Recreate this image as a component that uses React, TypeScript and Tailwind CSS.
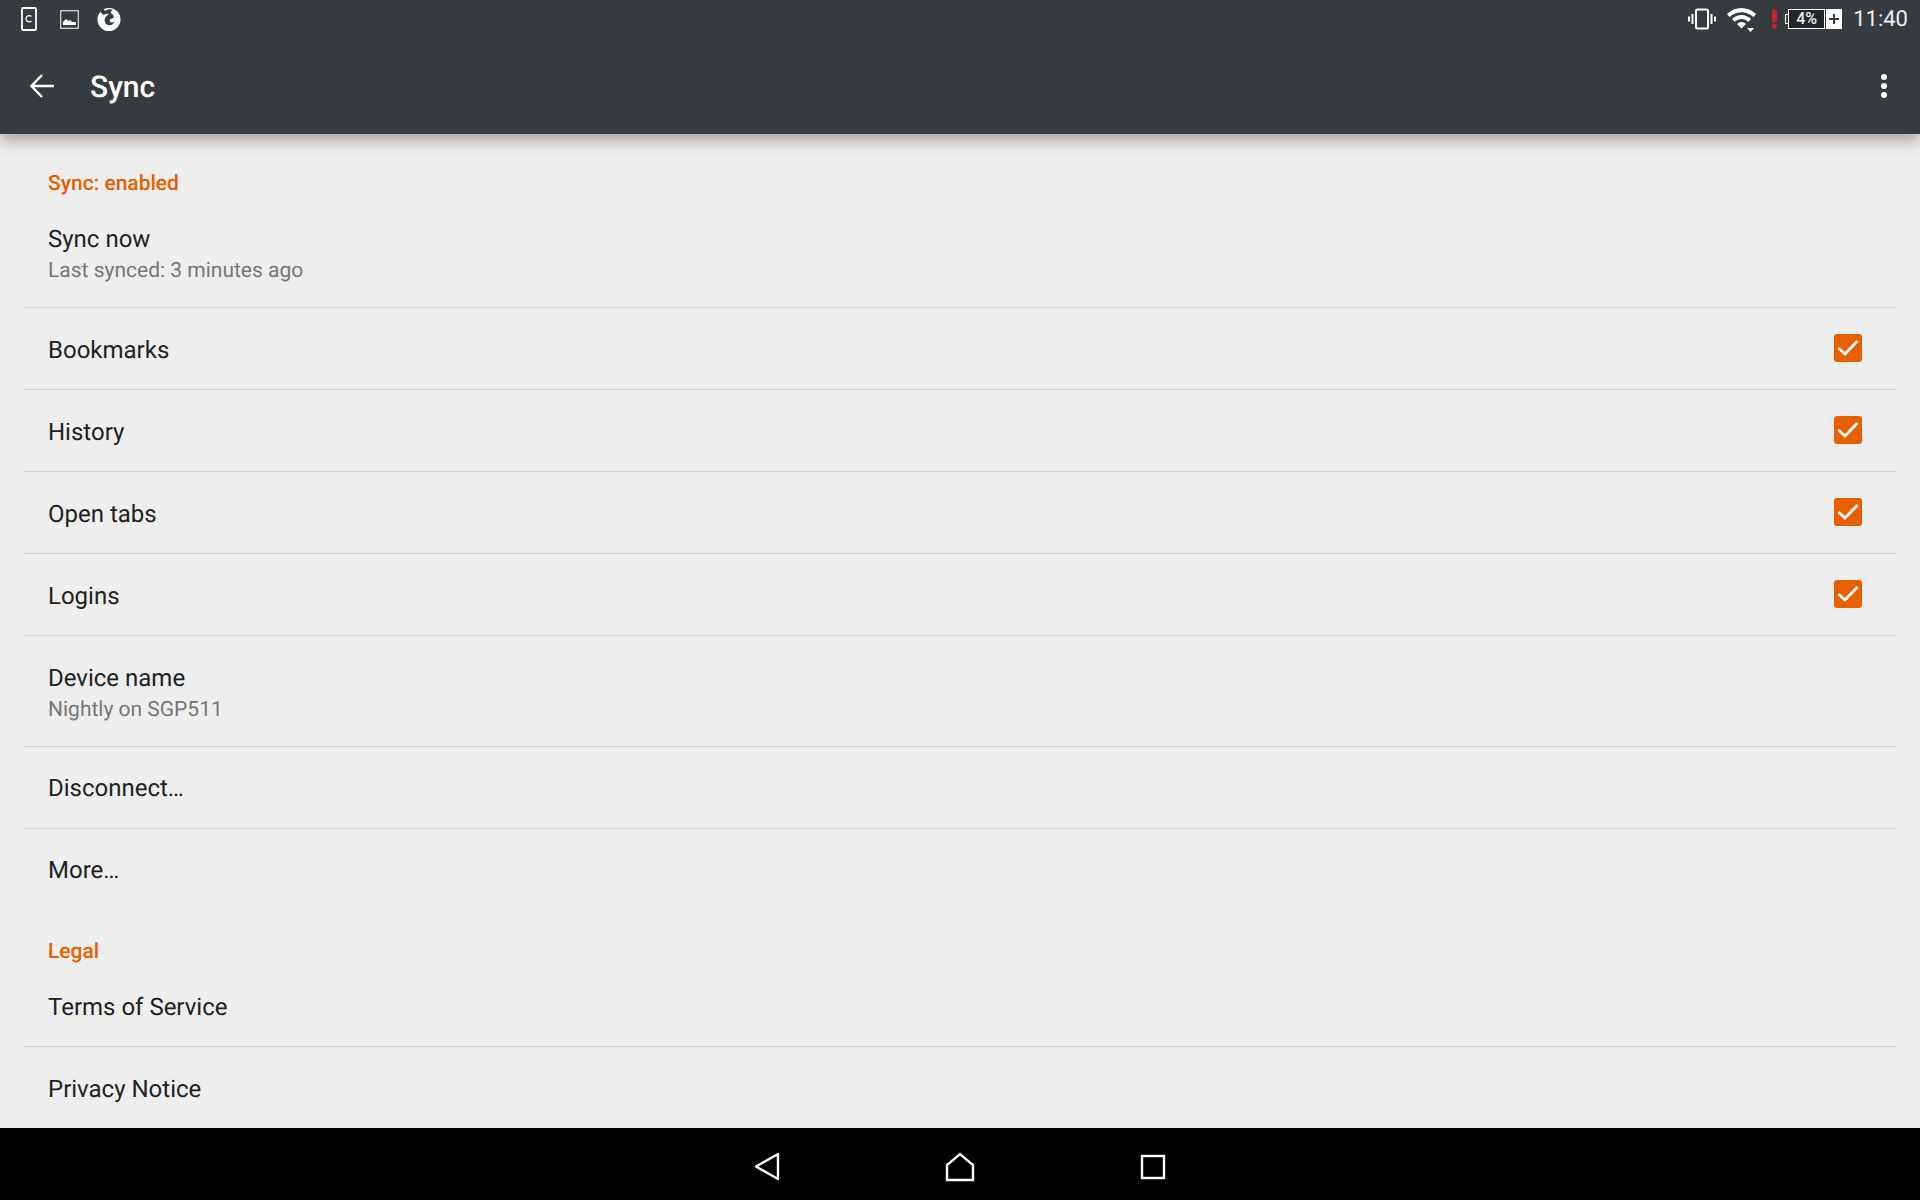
import React from 'react';

const font = { fontFamily: 'Roboto, sans-serif' };

const Divider: React.FC = () => <div className="h-px bg-[#d2d2d2]" />;

const SectionHeader: React.FC<{ title: string; height: string }> = ({ title, height }) => (
  <div className={`flex items-end pl-6 pb-[3px] ${height}`}>
    <span className="text-[21px] leading-[20px] font-medium text-[#e66000] [text-rendering:geometricPrecision]">{title}</span>
  </div>
);

const Check: React.FC = () => (
  <div className="flex items-center justify-center w-7 h-7 mb-[3px] rounded-[3px] bg-[#e66000]">
    <svg width="22" height="18" viewBox="0 0 22 18" fill="none" stroke="#f4f4f4" strokeWidth="3">
      <path d="M1.5 9 L8 15 L20.5 2" />
    </svg>
  </div>
);

const Row: React.FC<{ title: string; subtitle?: string; checked?: boolean; tight?: boolean }> = ({ title, subtitle, checked, tight }) => {
  let size = 'h-[81px] pt-[2px]';
  if (subtitle) size = 'h-[110px] pt-[6px]';
  if (tight) size = 'h-[81px]';
  return (
    <div className={`flex items-center justify-between pl-6 pr-[34px] ${size}`}>
      <div className="[text-rendering:geometricPrecision]">
        <div className="text-[24px] leading-[30px] text-[#222]">{title}</div>
        {subtitle && <div className="mt-[2px] text-[21px] leading-[31px] text-[#777]">{subtitle}</div>}
      </div>
      {checked && <Check />}
    </div>
  );
};

const StatusBar: React.FC = () => (
  <div className="flex items-center justify-between h-[38px] pl-[21px] pr-3">
    <div className="flex items-center">
      <svg width="16" height="24" viewBox="0 0 16 24" fill="none" stroke="#fff">
        <rect x="1" y="1" width="14" height="22" rx="1" strokeWidth="1.8" />
        <path d="M10.5 9.5 A3.2 3.2 0 1 0 10.5 14" strokeWidth="1.2" />
      </svg>
      <svg className="ml-[23px]" width="19" height="19" viewBox="0 0 19 19" fill="none">
        <rect x="0.7" y="0.7" width="17.6" height="17.6" stroke="#ddd" strokeWidth="1.2" />
        <path d="M3 15 V12 L6 9 L8.5 11 L10 10 L12 12 L16 12 V15 Z" fill="#fff" />
      </svg>
      <svg className="ml-[18px]" width="24" height="24" viewBox="0 0 24 24">
        <circle cx="12" cy="12.5" r="11.5" fill="#fff" />
        <path d="M3 5 L6 1.5 L8 4 C11 1.5 14 2 16 3 C13 4 13 6 15 7 C17 8 17.5 11 15 11.5 C13 12 12 13 13 14.5 C14 16 16 16 18 14 C17 17 14 19 11 18 C8 17 7 14 8 11 C9 9 11 8 12 7 C10 6.5 8 7 6.5 8 C6 7 4.5 6 3 5 Z" fill="#363b40" />
      </svg>
    </div>
    <div className="flex items-center">
      <svg width="28" height="22" viewBox="0 0 28 22" fill="none" stroke="#fff">
        <rect x="8" y="1.5" width="12" height="19" rx="1.5" strokeWidth="2" />
        <path d="M4.5 6 V16 M23.5 6 V16" strokeWidth="2" />
        <path d="M1 8.5 V13.5 M27 8.5 V13.5" strokeWidth="2" />
      </svg>
      <svg className="ml-[11px] mt-px" width="30" height="25" viewBox="0 0 30 25" fill="#fff">
        <path d="M0 7 C8 -1 21 -1 29 7 L26.5 10 C19.5 3.5 9.5 3.5 2.5 10 Z" />
        <path d="M5 12 C10.5 6.5 18.5 6.5 24 12 L21.5 15 C17.5 11 11.5 11 7.5 15 Z" />
        <path d="M10 17 C12.5 14.3 16.5 14.3 19 17 L14.5 21.5 Z" />
        <path d="M20 21 H27 L23.5 25 Z" />
      </svg>
      <div className="ml-[14px] w-[6px] h-[20px] flex flex-col items-center justify-between">
        <div className="w-[5px] h-[14px] rounded-[2px] bg-[#d0202a]" />
        <div className="w-[5px] h-[5px] rounded-full bg-[#d0202a]" />
      </div>
      <div className="ml-[8px] flex items-center">
        <div className="w-[3px] h-[10px] border border-r-0 border-white" />
        <div className="flex items-center justify-center w-[37px] h-[20px] border border-white bg-[#22252a] text-[16px] font-medium leading-none text-[#eee]">4%</div>
      </div>
      <div className="ml-px flex items-center justify-center w-4 h-5 bg-white">
        <svg width="10" height="10" viewBox="0 0 10 10" stroke="#363b40" strokeWidth="2">
          <path d="M5 0 V10 M0 5 H10" />
        </svg>
      </div>
      <span className="ml-[11px] mt-[2px] text-[22px] leading-none text-[#eee] [text-rendering:geometricPrecision]">11:40</span>
    </div>
  </div>
);

const Toolbar: React.FC = () => (
  <div className="flex items-center justify-between h-[96px] pl-[30px] pr-[33px]">
    <div className="flex items-center">
      <svg width="24" height="24" viewBox="0 0 24 24" fill="none" stroke="#fff" strokeWidth="2.4">
        <path d="M24 12 H2 M12 1 L1.5 12 L12 23" />
      </svg>
      <span className="ml-[36px] mt-[4px] text-[30px] leading-none font-medium text-white [text-rendering:geometricPrecision]">Sync</span>
    </div>
    <div className="flex flex-col gap-[3px]">
      <div className="w-[6px] h-[6px] rounded-full bg-white" />
      <div className="w-[6px] h-[6px] rounded-full bg-white" />
      <div className="w-[6px] h-[6px] rounded-full bg-white" />
    </div>
  </div>
);

const NavBar: React.FC = () => (
  <div className="flex items-center justify-center h-[72px] pt-[5px] bg-black">
    <svg width="26" height="29" viewBox="0 0 26 29" fill="none" stroke="#fff" strokeWidth="2.4" strokeLinejoin="round">
      <path d="M24 2 V27 L2 14.5 Z" />
    </svg>
    <svg className="ml-[165px]" width="30" height="30" viewBox="0 0 30 30" fill="none" stroke="#fff" strokeWidth="2.4">
      <path d="M2 28 V13 L15 2 L28 13 V28 Z" />
    </svg>
    <svg className="ml-[165px]" width="26" height="26" viewBox="0 0 26 26" fill="none" stroke="#fff" strokeWidth="2.4">
      <rect x="2" y="2" width="22" height="22" />
    </svg>
  </div>
);

const App: React.FC = () => {
  return (
    <div className="flex flex-col h-[1200px] w-[1920px] bg-[#eeeeee] overflow-hidden" style={font}>
      <div className="relative z-10 bg-[#363b40] shadow-[0_7px_14px_rgba(0,0,0,0.3)]">
        <StatusBar />
        <Toolbar />
      </div>
      <div className="flex-1 px-6 overflow-hidden">
        <SectionHeader title="Sync: enabled" height="h-[63px]" />
        <Row title="Sync now" subtitle="Last synced: 3 minutes ago" />
        <Divider />
        <Row title="Bookmarks" checked />
        <Divider />
        <Row title="History" checked />
        <Divider />
        <Row title="Open tabs" checked />
        <Divider />
        <Row title="Logins" checked />
        <Divider />
        <Row title="Device name" subtitle="Nightly on SGP511" />
        <Divider />
        <Row title="Disconnect…" tight />
        <Divider />
        <Row title="More…" tight />
        <SectionHeader title="Legal" height="h-[55px]" />
        <Row title="Terms of Service" />
        <Divider />
        <Row title="Privacy Notice" />
      </div>
      <NavBar />
    </div>
  );
};

export default App;
